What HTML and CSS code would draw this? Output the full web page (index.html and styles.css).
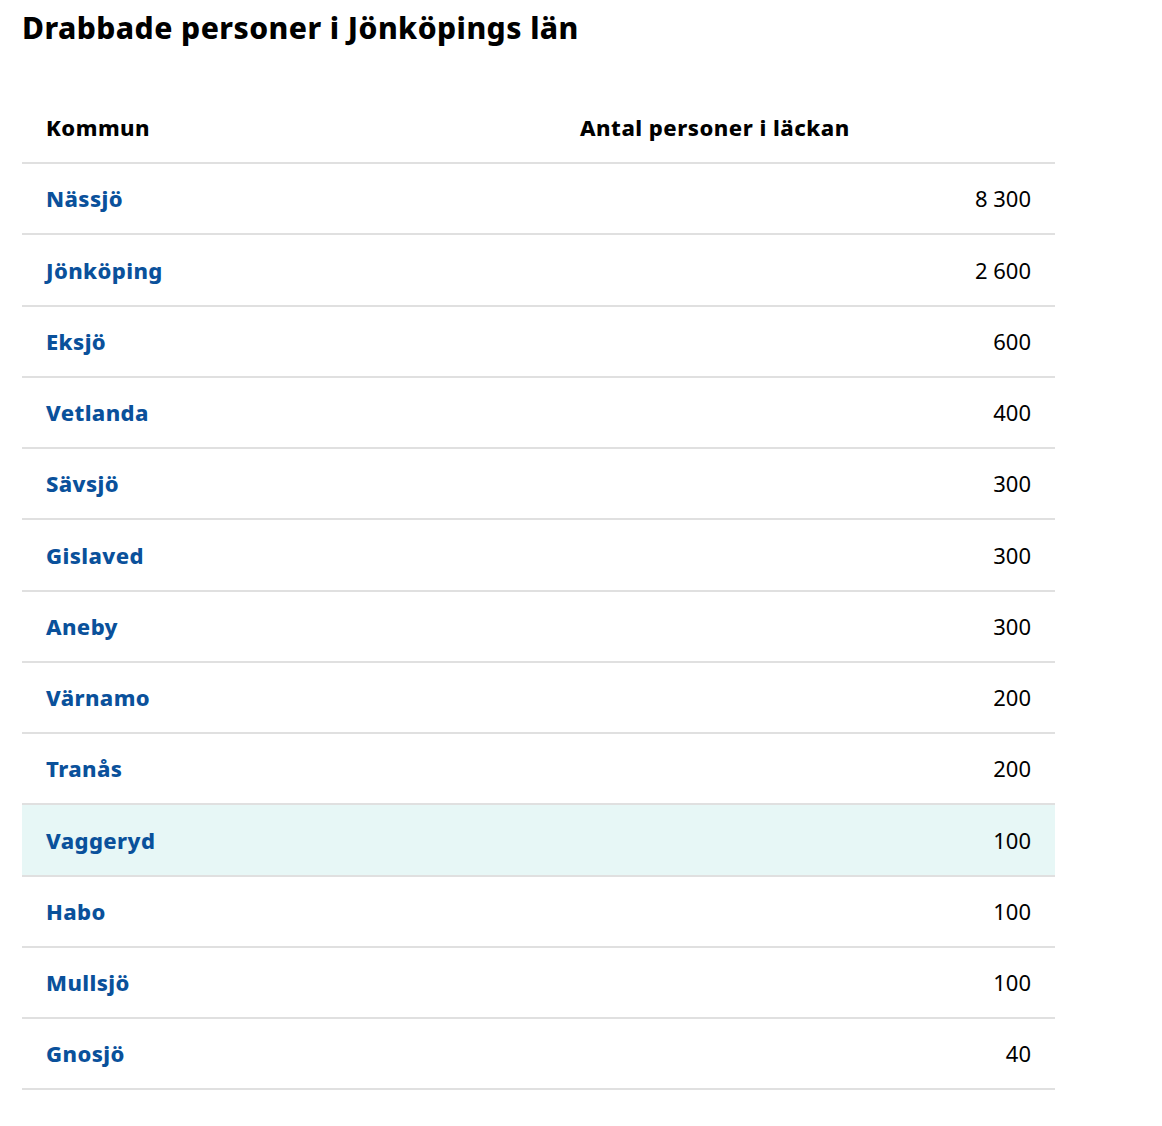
FILE: index.html
```html
<!DOCTYPE html>
<html lang="sv">
<head>
<meta charset="utf-8">
<title>Drabbade personer i Jönköpings län</title>
<link rel="stylesheet" href="styles.css">
</head>
<body>
<main class="page">
  <h1 class="title">Drabbade personer i Jönköpings län</h1>
  <table class="data">
    <thead>
      <tr><th class="col-name">Kommun</th><th class="col-num">Antal personer i läckan</th></tr>
    </thead>
    <tbody>
      <tr><td><a href="#">Nässjö</a></td><td class="num">8 300</td></tr>
      <tr><td><a href="#">Jönköping</a></td><td class="num">2 600</td></tr>
      <tr><td><a href="#">Eksjö</a></td><td class="num">600</td></tr>
      <tr><td><a href="#">Vetlanda</a></td><td class="num">400</td></tr>
      <tr><td><a href="#">Sävsjö</a></td><td class="num">300</td></tr>
      <tr><td><a href="#">Gislaved</a></td><td class="num">300</td></tr>
      <tr><td><a href="#">Aneby</a></td><td class="num">300</td></tr>
      <tr><td><a href="#">Värnamo</a></td><td class="num">200</td></tr>
      <tr><td><a href="#">Tranås</a></td><td class="num">200</td></tr>
      <tr class="hover"><td><a href="#">Vaggeryd</a></td><td class="num">100</td></tr>
      <tr><td><a href="#">Habo</a></td><td class="num">100</td></tr>
      <tr><td><a href="#">Mullsjö</a></td><td class="num">100</td></tr>
      <tr><td><a href="#">Gnosjö</a></td><td class="num">40</td></tr>
    </tbody>
  </table>
</main>
</body>
</html>
```

FILE: styles.css
```css
html, body {
  margin: 0;
  padding: 0;
  background: #ffffff;
}
body {
  font-family: "Noto Sans", "Open Sans", sans-serif;
  color: #000;
}
.page {
  padding: 8px 22px 0 22px;
}
.title {
  margin: 0;
  font-size: 30px;
  line-height: 40px;
  font-weight: 800;
  letter-spacing: 0.45px;
}
.data {
  margin-top: 45px;
  width: 1033px;
  border-collapse: collapse;
  font-size: 22px;
  line-height: 30.8px;
}
.data th {
  font-weight: 800;
  letter-spacing: 0.5px;
  text-align: left;
  padding: 19.22px 24px;
  border-bottom: 2px solid #e0e0e0;
}
.data .col-name {
  width: 486px;
}
.data td {
  padding: 19.22px 24px;
  border-bottom: 2px solid #e0e0e0;
}
.data td.num {
  text-align: right;
}
.data a {
  color: #0a519b;
  font-weight: 800;
  letter-spacing: 0.4px;
  text-decoration: none;
}
.data tr.hover td {
  background: #e7f7f6;
}
```
